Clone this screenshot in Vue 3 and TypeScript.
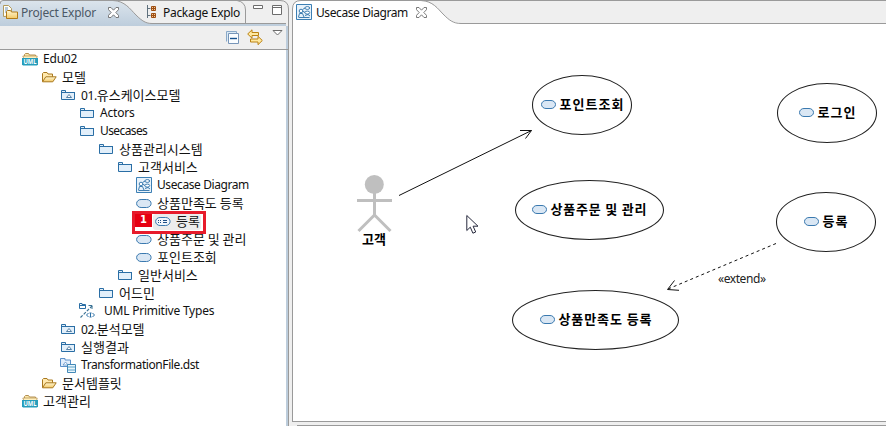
<script setup lang="ts">
type IconName = 'uml' | 'open' | 'folder' | 'model' | 'diagram' | 'usecase' | 'usecaseExt' | 'primitive' | 'transform'

interface TreeRow {
  level: number
  icon: IconName
  label: string
  tone?: string
  selected?: boolean
}

const rows: TreeRow[] = [
  { level: 0, icon: 'uml', label: 'Edu02', tone: 'loose' },
  { level: 1, icon: 'open', label: '모델' },
  { level: 2, icon: 'model', label: '01.유스케이스모델' },
  { level: 3, icon: 'folder', label: 'Actors', tone: 'loose' },
  { level: 3, icon: 'folder', label: 'Usecases', tone: 'tight' },
  { level: 4, icon: 'folder', label: '상품관리시스템' },
  { level: 5, icon: 'folder', label: '고객서비스' },
  { level: 6, icon: 'diagram', label: 'Usecase Diagram' },
  { level: 6, icon: 'usecase', label: '상품만족도 등록' },
  { level: 7, icon: 'usecaseExt', label: '등록', selected: true },
  { level: 6, icon: 'usecase', label: '상품주문 및 관리' },
  { level: 6, icon: 'usecase', label: '포인트조회' },
  { level: 5, icon: 'folder', label: '일반서비스' },
  { level: 4, icon: 'folder', label: '어드민' },
  { level: 3, icon: 'primitive', label: 'UML Primitive Types', tone: 'wide' },
  { level: 2, icon: 'model', label: '02.분석모델' },
  { level: 2, icon: 'model', label: '실행결과' },
  { level: 2, icon: 'transform', label: 'TransformationFile.dst' },
  { level: 1, icon: 'open', label: '문서템플릿' },
  { level: 0, icon: 'uml', label: '고객관리' },
]

// Splits a label into a leading Latin run and a Hangul run, which are set at different sizes.
function runs(label: string): { text: string; hangul: boolean }[] {
  const start = label.search(/[가-힣]/)
  if (start < 0) return [{ text: label, hangul: false }]
  const parts = [{ text: label.slice(start), hangul: true }]
  if (start > 0) parts.unshift({ text: label.slice(0, start), hangul: false })
  return parts
}

interface UseCase {
  cx: number
  cy: number
  rx: number
  iconX: number
  iconY: number
  textX: number
  width: number
  label: string
}

const useCases: UseCase[] = [
  { cx: 582, cy: 105, rx: 49.5, iconX: 541, iconY: 100, textX: 559.5, width: 64, label: '포인트조회' },
  { cx: 589.5, cy: 210, rx: 74, iconX: 532, iconY: 205, textX: 550.5, width: 96, label: '상품주문 및 관리' },
  { cx: 595.5, cy: 320, rx: 83, iconX: 540, iconY: 315, textX: 558.5, width: 93, label: '상품만족도 등록' },
  { cx: 827, cy: 113, rx: 49.5, iconX: 799, iconY: 108, textX: 817.5, width: 38, label: '로그인' },
  { cx: 826, cy: 222, rx: 49.5, iconX: 804, iconY: 217, textX: 822.5, width: 25, label: '등록' },
]

const LEVEL_STEP = 19
</script>

<template>
  <div class="workbench">
    <svg class="defs" width="0" height="0">
      <defs>
        <linearGradient id="tabFill" x1="0" y1="0" x2="0" y2="1">
          <stop offset="0" stop-color="#dbe4ec" />
          <stop offset="1" stop-color="#bdcddc" />
        </linearGradient>
        <linearGradient id="gold" x1="0" y1="0" x2="0" y2="1">
          <stop offset="0" stop-color="#fff6d2" />
          <stop offset="1" stop-color="#f3c966" />
        </linearGradient>
        <symbol id="close" viewBox="0 0 11 11">
          <path d="M.5.5h2.500l2.500 2.700L8 .5h2.500v2.200L7.800 5.500l2.700 2.800v2.200H8L5.500 7.800 3 10.500H.5V8.300L3.200 5.500.5 2.700z" fill="#fff" stroke="#6c6c6c" stroke-width=".9" />
        </symbol>
        <symbol id="uml" viewBox="0 0 16 16">
          <path d="M2.500 8V3.500l1-1h3l1 1.500h6V8" fill="#fbe7a9" stroke="#b38f52" />
          <path d="M.8 5h14.400L14.500 8H2z" fill="#fff0bd" stroke="#b9975a" stroke-width=".8" />
          <path d="M0 7h16v6.500l-1 1H1l-1-1z" fill="#269dbb" />
          <text x="8" y="13.400" text-anchor="middle" textLength="13" lengthAdjust="spacingAndGlyphs" font-size="7.500" font-weight="700" fill="#fff">UML</text>
        </symbol>
        <symbol id="open" viewBox="0 0 16 16">
          <path d="M1.500 12.500v-8l1-1h3.500l1 1.500h4.500v3" fill="#ffe9ae" stroke="#a9781f" />
          <path d="M1.500 12.800l3.300-5h10.400l-3.400 5z" fill="url(#gold)" stroke="#a9781f" />
        </symbol>
        <symbol id="folder" viewBox="0 0 16 16">
          <path d="M1.500 12.500v-9h4v2h9v7z" fill="#e2effa" stroke="#2a6ea5" />
          <path d="M1 5.500h14" stroke="#2a6ea5" />
        </symbol>
        <symbol id="model" viewBox="0 0 16 16">
          <path d="M1.500 12.500v-9h4v2h9v7z" fill="#e2effa" stroke="#2a6ea5" />
          <path d="M1 5.500h14" stroke="#2a6ea5" />
          <path d="M6.500 10.500h5l-2.500-3z" fill="#fff" stroke="#44739b" stroke-width=".9" />
        </symbol>
        <symbol id="diagram" viewBox="0 0 16 16">
          <path d="M.5.5h15v15H.5z" fill="#e8f2fa" stroke="#3c7fb4" />
          <path d="M6.500 5.500l2.500-1.500M6.500 7l2.500 1.500M2.500 13l1-3.500h3l1.500 3.500M2.500 13.500h11M9 11.500l3-1 2 1.500" fill="none" stroke="#2b71a8" stroke-width=".9" />
          <circle cx="5" cy="7" r="1.800" fill="#fff" stroke="#2b71a8" stroke-width=".9" />
          <ellipse cx="11.300" cy="4" rx="2.400" ry="1.400" fill="#fff" stroke="#2b71a8" stroke-width=".9" />
          <ellipse cx="11.300" cy="8.600" rx="2.400" ry="1.500" fill="#fff" stroke="#2b71a8" stroke-width=".9" />
        </symbol>
        <symbol id="usecase" viewBox="0 0 16 16">
          <rect x=".6" y="4.500" width="14.500" height="8" rx="4.500" ry="4" fill="#dae7f4" stroke="#3a79af" />
        </symbol>
        <symbol id="usecaseExt" viewBox="0 0 16 16">
          <rect x=".6" y="4.500" width="14.500" height="8" rx="4.500" ry="4" fill="#f1f6fc" stroke="#3a79af" />
          <path d="M3 7.500h1m1 0h1m2 0h4M3 9.500h1m1 0h1m2 0h4" stroke="#1e4f86" />
        </symbol>
        <symbol id="primitive" viewBox="0 0 16 16">
          <path d="M.5 5.500V.5h2.500v1h3.500v4z" fill="#fff" stroke="#2a6ea5" />
          <path d="M.5 2.500h6" stroke="#2a6ea5" />
          <path d="M1.500 14.500l12-12" fill="none" stroke="#3b7294" stroke-width="1.200" stroke-dasharray="3 1.500" />
          <path d="M9.500 2.500H13V6" fill="none" stroke="#3b7294" />
          <path d="M9.500 10l-2 2 2 2M13.500 10l2 2-2 2M10.500 10h2m-1 0v4m-1 0h2" fill="none" stroke="#2a6ea5" />
        </symbol>
        <symbol id="transform" viewBox="0 0 16 16">
          <path d="M.5 9.500v-8h4.500v1.500h5.500v6.500z" fill="#e2edfb" stroke="#5b8fc9" />
          <path d="M3 8h5L5.500 5z" fill="#fff" stroke="#5b8fc9" stroke-width=".8" />
          <path d="M7.500 7.500h8v8h-8z" fill="#e9f5fb" stroke="#4389b7" />
          <path d="M8 10h7M8 13h7" stroke="#5ba0c8" />
        </symbol>
      </defs>
    </svg>

    <section class="explorer">
      <header class="tabs">
        <svg class="shape" width="289" height="26" viewBox="0 0 289 26">
          <path d="M0 0H289V26H0z" fill="#efefef" />
          <path d="M0 26V3L2 1H113C125 1 130 9 136 15C142 21 146 23.500 152 23.500H286V26z" fill="url(#tabFill)" />
          <path d="M0 4Q0 .5 3 .5H280Q288.500 .5 288.500 9V26" fill="none" stroke="#9a9a9a" />
          <path d="M113 .5C125 1 130 9 136 15C142 21 146 23.500 152 23.500H286" fill="none" stroke="#9a9a9a" />
          <path d="M237 .5Q245.500 2 245.500 10V23" fill="none" stroke="#9a9a9a" />
        </svg>
        <div class="tab active">
          <svg width="16" height="16" viewBox="0 0 16 16">
            <path d="M1.500 12.500V1.500h5l3 3V12z" fill="#fffef5" stroke="#b29a5c" />
            <path d="M3 4h3M3 6h3M3 8h2" stroke="#6d90bb" />
            <path d="M4.500 14.500V7.500l1-1h3l1 1.500h6v6.500z" fill="url(#gold)" stroke="#b17a18" />
          </svg>
          <span class="title explorer-title">Project Explor</span>
          <svg class="close" width="11" height="11"><use href="#close" /></svg>
        </div>
        <div class="tab package">
          <svg width="10" height="14" viewBox="0 0 10 14">
            <path d="M.5 0v13M.5 3.500h3M.5 10.500h3" stroke="#60717d" />
            <path d="M4.500 1.500h4v4h-4zM4.500 8.500h4v4h-4zM6.500 1v5M4 3.500h5M6.500 8v5M4 10.500h5" fill="#f5c995" stroke="#9c4d12" />
          </svg>
          <span class="title package-title">Package Explo</span>
        </div>
        <svg class="window-buttons" width="30" height="12" viewBox="0 0 30 12">
          <path d="M.5 1.500h9v3h-9z" fill="#fff" stroke="#6c6c6c" />
          <path d="M19.500 1.500h9v9h-9zM19 3.500h10" fill="#fff" stroke="#6c6c6c" />
        </svg>
      </header>

      <div class="toolbar">
        <svg width="14" height="14" viewBox="0 0 14 14">
          <path d="M.5 10.500V.5h10v2" fill="#dbeaf5" stroke="#8aa9c8" />
          <path d="M2.500 2.500h10v10h-10z" fill="#fafdff" stroke="#7795b8" />
          <path d="M4 7.500h7" stroke="#15518e" stroke-width="1.400" />
        </svg>
        <svg width="16" height="17" viewBox="0 0 16 17">
          <path d="M.7 5L5 .8v2.700h6.500v3H5v2.700z" fill="#ffe9a0" stroke="#ba8113" />
          <path d="M15.300 11.500L11 7.300V10H3.500v3H11v2.700z" fill="#ffe9a0" stroke="#ba8113" />
        </svg>
        <svg class="menu" width="11" height="6" viewBox="0 0 11 6">
          <path d="M1 .5h9L5.500 5z" fill="#fff" stroke="#6c6c6c" />
        </svg>
      </div>

      <ul class="tree">
        <li v-for="row in rows" :key="row.label" class="row" :style="{ paddingLeft: 22 + row.level * LEVEL_STEP + 'px' }">
          <svg class="icon" width="16" height="16"><use :href="'#' + row.icon" /></svg>
          <span class="label" :class="row.tone"><span v-for="run in runs(row.label)" :key="run.text" :class="run.hangul ? 'hangul' : 'latin'">{{ run.text }}</span></span>
          <template v-if="row.selected">
            <span class="selection"></span>
            <span class="callout"><b>1</b></span>
          </template>
        </li>
      </ul>
    </section>

    <section class="editor">
      <header class="editor-tabs">
        <svg class="shape" width="594" height="24" viewBox="0 0 594 24">
          <path d="M0 0H594V24H0z" fill="#efefef" />
          <path d="M0 24V8Q1 1 8 1H128C141 1 146 10 151 14C157 20 161 23 168 23V24z" fill="#fff" />
          <path d="M.5 24V9Q.5 .5 9 .5H594" fill="none" stroke="#9a9a9a" />
          <path d="M129 .5C141 1 146 9 151 14C157 20 161 23.500 169 23.500H594" fill="none" stroke="#9a9a9a" />
        </svg>
        <div class="tab editor-tab">
          <svg width="16" height="16"><use href="#diagram" /></svg>
          <span class="title editor-title">Usecase Diagram</span>
          <svg class="close" width="11" height="11"><use href="#close" /></svg>
        </div>
      </header>
      <div class="canvas">
        <svg width="593" height="397" viewBox="293 24 593 397">
          <g fill="none" stroke="#bfbfbf" stroke-width="3">
            <circle cx="374.300" cy="184.500" r="9.500" fill="#bfbfbf" stroke="none" />
            <path d="M374.500 193v23M357 200.500h35M374.500 215l-16 16M374.500 215l16 16" />
          </g>
          <text class="node" x="362" y="243.500" textLength="24">고객</text>

          <path class="edge" d="M399 195.500L531.500 130.500M520 130.500h11.500l-6 8" />
          <path class="edge" d="M776 243.500L668 289" stroke-dasharray="3 3" />
          <path class="edge" d="M674.500 280.500L667.500 289.500l11.500 .8" />
          <text class="stereotype" x="718" y="283" textLength="48">«extend»</text>

          <g v-for="item in useCases" :key="item.label">
            <ellipse :cx="item.cx" :cy="item.cy" :rx="item.rx" ry="29.500" class="bubble" />
            <rect :x="item.iconX + 0.5" :y="item.iconY + 0.5" width="14" height="8" rx="4.500" ry="4" fill="#dae7f4" stroke="#3a79af" />
            <text class="node" :x="item.textX" :y="item.iconY + 8.500" :textLength="item.width">{{ item.label }}</text>
          </g>

          <path d="M466.800 215.500v15l3.500-3.300 2.600 6 2.800-1.200-2.600-5.800h4.900z" fill="#fff" stroke="#26283c" />
        </svg>
      </div>
      <footer class="lower-edge"></footer>
    </section>
  </div>
</template>

<style>
body {
  background: #efefef;
  overflow: hidden;
}
</style>

<style scoped>
.workbench {
  display: flex;
  gap: 3px;
  width: 886px;
  height: 426px;
  background: #efefef;
  color: #111;
  font: 12px/18px "Noto Sans", "Noto Sans CJK KR", sans-serif;
  overflow: hidden;
}
.defs {
  position: absolute;
}
svg {
  display: block;
  flex: none;
}
.explorer {
  display: flex;
  flex-direction: column;
  box-sizing: border-box;
  width: 289px;
  flex: none;
}
.tabs {
  position: relative;
  display: flex;
  height: 26px;
  flex: none;
}
.shape {
  position: absolute;
  inset: 0;
}
.tab {
  position: relative;
  display: flex;
  align-items: center;
  height: 24px;
  white-space: nowrap;
}
.active {
  width: 145px;
  padding-left: 2px;
  color: #4b5866;
}
.title {
  flex: none;
  padding-top: 1px;
}
.explorer-title {
  width: 79px;
  margin-left: 3px;
  letter-spacing: -0.22px;
}
.package-title {
  width: 90px;
  margin-left: 6px;
  letter-spacing: -0.3px;
}
.window-buttons {
  position: relative;
  margin-top: 4px;
}
.toolbar {
  display: flex;
  align-items: flex-start;
  gap: 7px;
  box-sizing: border-box;
  height: 24px;
  padding: 5px 0 0 226px;
  border-right: 1px solid #9a9a9a;
  border-bottom: 1px solid #9a9a9a;
  background: #efefef;
  box-shadow: inset -2px 0 #bdcddc;
  flex: none;
}
.toolbar svg:nth-child(2) {
  margin-top: -2px;
}
.toolbar .menu {
  margin: -1px 0 0 2px;
}
.tree {
  flex: 1;
  margin: 0;
  padding: 0;
  list-style: none;
  background: #fff;
  border-right: 1px solid #9a9a9a;
  box-shadow: inset -2px 0 #bdcddc;
}
.row {
  position: relative;
  display: flex;
  align-items: center;
  gap: 5px;
  height: 18px;
  white-space: nowrap;
}
.icon,
.label {
  position: relative;
  z-index: 1;
}
.label {
  display: flex;
  align-items: baseline;
  height: 18px;
}
.hangul {
  font: 13px/18px "Noto Sans CJK KR", sans-serif;
}
.latin {
  letter-spacing: -0.41px;
}
.loose .latin {
  letter-spacing: -0.2px;
}
.tight .latin {
  letter-spacing: -0.6px;
}
.wide {
  margin-left: 4px;
}
.wide .latin {
  letter-spacing: -0.23px;
}
.selection {
  position: absolute;
  left: 153px;
  top: 2px;
  width: 48px;
  height: 16px;
  border-radius: 3px;
  background: #ececec;
}
.callout {
  position: absolute;
  left: 132px;
  top: -1px;
  box-sizing: border-box;
  width: 74px;
  height: 23px;
  border: 3px solid #e71b2b;
  z-index: 2;
}
.callout b {
  display: block;
  width: 17px;
  height: 13px;
  background: #e60012;
  color: #fff;
  font: 700 10px/12px "DejaVu Sans", sans-serif;
  text-align: center;
}
.editor {
  display: flex;
  flex-direction: column;
  width: 594px;
  flex: none;
}
.editor-tabs {
  position: relative;
  height: 24px;
  flex: none;
}
.editor-tab {
  padding-left: 4px;
}
.editor-title {
  width: 92px;
  margin-left: 4px;
  letter-spacing: -0.41px;
}
.close {
  margin-left: 8px;
}
.canvas {
  height: 397px;
  border-left: 1px solid #9a9a9a;
  border-bottom: 1px solid #9a9a9a;
  background: #fff;
}
.lower-edge {
  height: 3px;
  margin-left: 5px;
  border-bottom: 1px solid #9a9a9a;
}
.node {
  font: 700 13px "Noto Sans CJK KR", sans-serif;
  fill: #000;
}
.stereotype {
  font-size: 12px;
  fill: #222;
}
.edge {
  fill: none;
  stroke: #111;
  stroke-width: 1;
}
.bubble {
  fill: #fff;
  stroke: #222;
  stroke-width: 1.050;
}
</style>
